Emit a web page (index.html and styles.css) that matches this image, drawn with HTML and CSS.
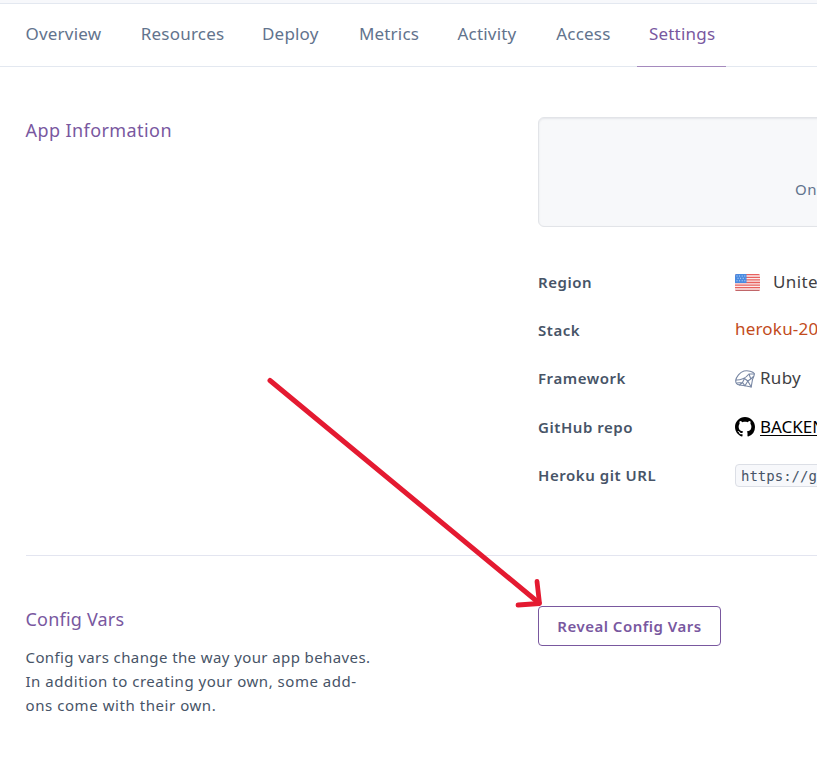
FILE: index.html
```html
<!DOCTYPE html>
<html lang="en">
<head>
<meta charset="utf-8">
<title>App Settings</title>
<link rel="stylesheet" href="styles.css">
</head>
<body>
<nav class="tabs">
  <a class="tab"><span>Overview</span></a>
  <a class="tab"><span>Resources</span></a>
  <a class="tab"><span>Deploy</span></a>
  <a class="tab"><span>Metrics</span></a>
  <a class="tab"><span>Activity</span></a>
  <a class="tab"><span>Access</span></a>
  <a class="tab active"><span>Settings</span></a>
</nav>
<main>
  <section class="section info">
    <h2 class="heading app-heading">App Information</h2>
    <div class="content">
      <div class="well"><span>On</span></div>
      <dl class="details">
        <dt>Region</dt>
        <dd>
          <svg class="flag" width="25" height="17" viewBox="0 0 25 17">
            <defs><clipPath id="flag-clip"><rect width="25" height="17" rx="1.5"/></clipPath></defs>
            <g clip-path="url(#flag-clip)">
              <rect width="25" height="17" fill="#fbecec"/>
              <path d="M0 .7h25M0 3.3h25M0 5.900h25M0 8.500h25M0 11.100h25M0 13.700h25M0 16.300h25" stroke="#e8615f" stroke-width="1.300"/>
              <rect width="11.500" height="9" fill="#4a8ae0"/>
              <path d="M1.500 2h9M2.500 4.300h8M1.500 6.800h9" stroke="#c5dcf8" stroke-width="1" stroke-dasharray="1 1.600"/>
            </g>
            <path d="M1 16.600h23" stroke="#a96b70" stroke-width=".7"/>
          </svg>
          <span class="region">United States</span>
        </dd>
        <dt>Stack</dt>
        <dd><span class="stack">heroku-20</span></dd>
        <dt class="l-framework">Framework</dt>
        <dd>
          <svg class="ruby" width="20" height="18" viewBox="0 0 20 18" fill="none" stroke="#7786a3" stroke-width="1.1" stroke-linejoin="round" stroke-linecap="round">
            <path d="M.8 10.500C1 7 5 2 9 1c4-.7 9 .3 10.300 2.600.3 1.500-1 4-1.800 5.900l-1.300 7.500L10 15.800 4.500 15C2 14.500.5 13 .8 10.500z"/>
            <path d="M.8 10C5 10.500 11 8 13.500 4.500M9.500 8.500 12.800 11 15.800 9 14 4 19 4M15.800 9 18.500 6.500M12.800 11 10 15.800 7.500 12.500 9.500 8.500M7.500 12.500 1.800 13M7.500 12.500 4.500 15M12.800 11 16.200 17"/>
          </svg>
          <span class="language">Ruby</span>
        </dd>
        <dt>GitHub repo</dt>
        <dd>
          <svg class="github" width="20" height="20" viewBox="0 0 16 16"><path d="M8 0C3.580 0 0 3.580 0 8c0 3.540 2.290 6.530 5.470 7.590.4.070.550-.170.550-.380 0-.190-.010-.820-.010-1.490-2.010.370-2.530-.490-2.690-.940-.090-.230-.480-.940-.820-1.130-.280-.150-.680-.520-.010-.530.630-.010 1.080.580 1.230.820.720 1.210 1.870.870 2.330.660.070-.520.280-.870.510-1.070-1.780-.200-3.640-.890-3.640-3.950 0-.870.310-1.590.820-2.150-.080-.200-.360-1.020.080-2.120 0 0 .670-.210 2.200.820.640-.180 1.320-.270 2-.270s1.360.090 2 .270c1.530-1.040 2.200-.820 2.200-.820.440 1.100.160 1.920.080 2.120.510.560.820 1.270.820 2.150 0 3.070-1.870 3.750-3.650 3.950.290.250.540.730.540 1.480 0 1.070-.010 1.930-.010 2.200 0 .210.150.460.550.380A8.010 8.010 0 0 0 16 8c0-4.420-3.580-8-8-8z"/></svg>
          <a class="repo">BACKEND</a>
        </dd>
        <dt>Heroku git URL</dt>
        <dd><code>https://git.heroku.com</code></dd>
      </dl>
    </div>
  </section>
  <section class="section config">
    <div>
      <h2 class="heading config-heading">Config Vars</h2>
      <p class="note"><span class="n1">Config vars change the way your app behaves.</span><br><span class="n2">In addition to creating your own, some add-</span><br><span class="n3">ons come with their own.</span></p>
    </div>
    <button class="reveal" type="button"><span>Reveal Config Vars</span></button>
  </section>
</main>
<svg class="arrow" width="300" height="250" viewBox="260 370 300 250" fill="none" stroke="#e41a31" stroke-linecap="round" stroke-linejoin="round">
  <path d="M270 380.500 539 603" stroke-width="5"/>
  <path d="M537 581.500 539.500 603.500 518 605" stroke-width="4.800"/>
</svg>
</body>
</html>
```
FILE: styles.css
```css
* { box-sizing: border-box; }
html, body { margin: 0; }
body {
  position: relative;
  width: 817px;
  height: 760px;
  overflow: hidden;
  background: #fff;
  color: #3f3f44;
  font-family: "Noto Sans", "Open Sans", sans-serif;
  border-top: 3px solid #f7f8fb;
}
.tabs {
  display: grid;
  grid-template-columns: 115.3px 121.2px 96.9px 98.6px 98.8px 92.7px 89px;
  height: 64px;
  padding-left: 13.5px;
  border-top: 1px solid #e3e8f0;
  border-bottom: 1px solid #e3e8f0;
}
.tab {
  height: 63px;
  padding: 17px 0 0 12px;
  font-size: 17px;
  font-weight: 370;
  line-height: 26px;
  letter-spacing: .2px;
  color: #62738d;
  white-space: nowrap;
}
.tab.active { color: #79589f; border-bottom: 1px solid #a58abe; }
.section { display: grid; grid-template-columns: 512.5px 279px; }
.info { height: 489px; margin-left: 25.5px; padding-top: 50px; border-bottom: 1px solid #e3e5f0; }
.config { margin-left: 25.5px; padding-top: 50px; }
.heading { margin: 0; font-size: 18px; font-weight: 370; line-height: 27px; color: #79589f; white-space: nowrap; }
.app-heading { letter-spacing: .42px; }
.config-heading { letter-spacing: .2px; }
.content { min-width: 0; }
.well {
  width: 300px;
  height: 110px;
  padding: 59px 0 0 256px;
  border: 1px solid #e2e4e8;
  border-radius: 6px;
  background: #f7f8fa;
  box-shadow: inset 0 1px 2px #e4e6ea;
  font-size: 15px;
  line-height: 24px;
  letter-spacing: .5px;
  color: #62738d;
}
.details { display: grid; grid-template-columns: 197px 82px; grid-auto-rows: 48.300px; margin: 31px 0 0; }
dt { align-self: center; font-size: 15px; font-weight: 600; line-height: 24px; letter-spacing: .55px; color: #475467; white-space: nowrap; }
.l-framework { padding-bottom: 2px; }
dd { display: flex; align-items: center; margin: 0; font-size: 17px; font-weight: 370; white-space: nowrap; }
dd svg { flex: none; }
.region { margin-left: 13px; padding-bottom: 2px; letter-spacing: .4px; }
.stack { color: #c24b1b; padding-bottom: 3px; letter-spacing: .2px; }
.language, .repo { margin-left: 5px; padding-bottom: 2px; }
.language { letter-spacing: .3px; }
.github { fill: #000; }
.repo { color: #000; letter-spacing: 0; text-decoration: underline; text-underline-offset: 2px; text-decoration-thickness: 1px; }
code {
  padding: 1px 5px 0;
  border: 1px solid #dcdfe6;
  border-radius: 4px;
  background: #f7f8fb;
  font-family: "DejaVu Sans Mono", "Liberation Mono", monospace;
  font-weight: 400;
  font-size: 14px;
  line-height: 20px;
  color: #475467;
}
.note { margin: 12px 0 0; font-size: 15px; line-height: 24px; color: #475467; white-space: nowrap; }
.n1 { letter-spacing: .4px; }
.n2 { letter-spacing: .52px; }
.n3 { letter-spacing: .56px; }
.reveal {
  width: 183px;
  height: 40px;
  padding: 0;
  border: 1px solid #79589f;
  border-radius: 4px;
  background: #fff;
  font: 600 15px/24px "Noto Sans", sans-serif;
  letter-spacing: .5px;
  color: #79589f;
}
.arrow { position: absolute; left: 260px; top: 367px; }
```
